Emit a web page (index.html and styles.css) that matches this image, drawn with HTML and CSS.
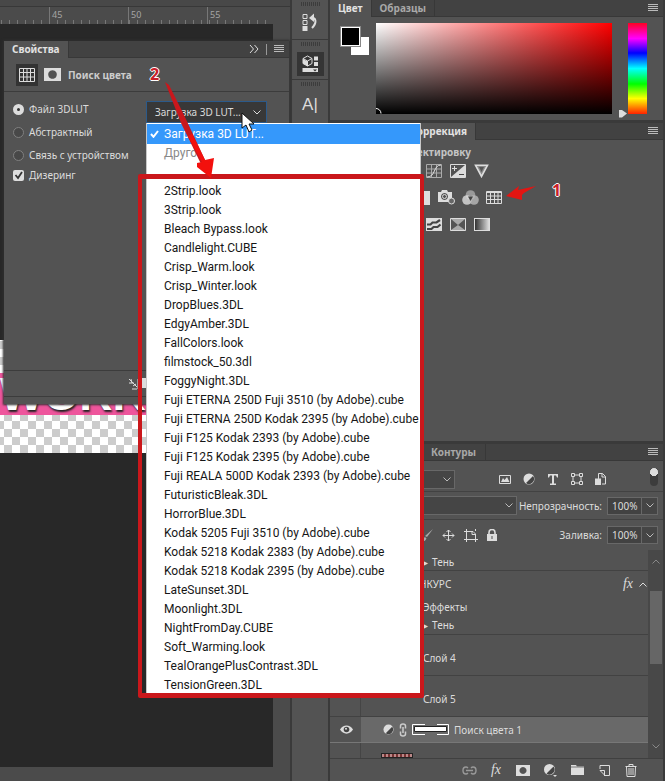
FILE: index.html
```html
<!DOCTYPE html>
<html lang="ru">
<head>
<meta charset="utf-8">
<title>Поиск цвета</title>
<link rel="stylesheet" href="styles.css">
</head>
<body>
<div class="app">
  <main class="workspace">
    <div class="topbar"></div>
    <div class="ruler"><span>45</span><span>50</span><span>55</span></div>
    <div class="document">
      <div class="artboard"><div class="banner">WORK</div></div>
    </div>
    <div class="status"></div>

    <section class="properties">
      <header class="tabs">
        <h2 class="tab active">Свойства</h2>
        <div class="tab-tools">
          <button class="icon" aria-label="Свернуть"><svg width="10" height="10" viewBox="0 0 10 10"><path class="line" d="M1 1l3.500 4L1 9M5.500 1L9 5 5.500 9"/></svg></button>
          <i class="divider"></i>
          <button class="icon burger" aria-label="Меню панели"></button>
        </div>
      </header>
      <div class="prop-title">
        <button class="icon boxed" aria-label="Таблица"><svg width="16" height="14" viewBox="0 0 16 14"><path class="line" d="M.5.5h15v13H.5zM.5 4.500h15M.5 9h15M4.500.5v13M8 .5v13M11.500.5v13"/></svg></button>
        <button class="icon" aria-label="Маска"><svg width="17" height="13" viewBox="0 0 17 13"><path class="fill" fill-rule="evenodd" d="M0 0h17v13H0zM8.500 2.200a4.300 4.300 0 1 0 .01 0z"/></svg></button>
        <h3>Поиск цвета</h3>
      </div>
      <div class="prop-body">
        <div class="choices">
          <label><input type="radio" name="lut" checked>Файл 3DLUT</label>
          <label><input type="radio" name="lut">Абстрактный</label>
          <label><input type="radio" name="lut">Связь с устройством</label>
          <label class="dither"><input type="checkbox" checked>Дизеринг</label>
        </div>
        <div class="lut-field">
          <select class="lut-select" aria-label="Файл 3DLUT"><option>Загрузка 3D LUT...</option></select>
          <svg class="chevron" width="8" height="5" viewBox="0 0 8 5"><path class="line" d="M.5.500L4 4 7.500.5"/></svg>
          <div class="menu">
            <ul>
              <li><button class="chosen"><svg width="9" height="8" viewBox="0 0 9 8"><path d="M1 4l2.500 2.800L8 1" fill="none" stroke="#fff" stroke-width="2"/></svg>Загрузка 3D LUT...</button></li>
              <li><button class="muted">Друго</button></li>
            </ul>
            <ul class="files">
              <li><button>2Strip.look</button></li>
              <li><button>3Strip.look</button></li>
              <li><button>Bleach Bypass.look</button></li>
              <li><button>Candlelight.CUBE</button></li>
              <li><button>Crisp_Warm.look</button></li>
              <li><button>Crisp_Winter.look</button></li>
              <li><button>DropBlues.3DL</button></li>
              <li><button>EdgyAmber.3DL</button></li>
              <li><button>FallColors.look</button></li>
              <li><button>filmstock_50.3dl</button></li>
              <li><button>FoggyNight.3DL</button></li>
              <li><button>Fuji ETERNA 250D Fuji 3510 (by Adobe).cube</button></li>
              <li><button>Fuji ETERNA 250D Kodak 2395 (by Adobe).cube</button></li>
              <li><button>Fuji F125 Kodak 2393 (by Adobe).cube</button></li>
              <li><button>Fuji F125 Kodak 2395 (by Adobe).cube</button></li>
              <li><button>Fuji REALA 500D Kodak 2393 (by Adobe).cube</button></li>
              <li><button>FuturisticBleak.3DL</button></li>
              <li><button>HorrorBlue.3DL</button></li>
              <li><button>Kodak 5205 Fuji 3510 (by Adobe).cube</button></li>
              <li><button>Kodak 5218 Kodak 2383 (by Adobe).cube</button></li>
              <li><button>Kodak 5218 Kodak 2395 (by Adobe).cube</button></li>
              <li><button>LateSunset.3DL</button></li>
              <li><button>Moonlight.3DL</button></li>
              <li><button>NightFromDay.CUBE</button></li>
              <li><button>Soft_Warming.look</button></li>
              <li><button>TealOrangePlusContrast.3DL</button></li>
              <li><button>TensionGreen.3DL</button></li>
            </ul>
            <div class="frame"></div>
          </div>
          <svg class="note-two" width="80" height="120" viewBox="0 0 80 120">
            <path fill="#c9171c" d="M19 17L23 20 38 50 60 97 56 101 35 58z"/>
            <path fill="#f3100d" d="M42 71l4-2 13 26 9-2-3 20-14-11 0-4 5-1z"/>
          </svg>
          <b class="number two">2</b>
          <svg class="cursor" width="14" height="21" viewBox="0 0 14 21"><path fill="#fff" stroke="#111" d="M1 1v15l4-3 3 7 3-2-3-6h5z"/></svg>
        </div>
      </div>
      <div class="prop-actions"><svg width="18" height="13" viewBox="0 0 18 13"><path class="line" d="M1 1l8 8M3 1l1 4M1 5h5M5 8l3-2M4 11h5M10 1v10"/><path class="fill" d="M13 0h5v10h-5z"/></svg></div>
    </section>
  </main>

  <nav class="strip">
    <div class="slot"><i class="grip"></i><button class="icon" aria-label="История"><svg width="18" height="20" viewBox="0 0 18 20"><path class="line" d="M2 2.500h4v4H2zM2 8.500h4v4H2z"/><path class="fill" d="M1.500 14h5v5h-5z"/><path d="M10 6c5.500-1 6 5 1 10" fill="none" stroke="#ddd" stroke-width="2"/><path class="fill" d="M8 6L13 1.500v8.500z"/></svg></button></div>
    <div class="slot"><i class="grip"></i><button class="icon pressed" aria-label="Свойства"><svg width="18" height="18" viewBox="0 0 18 18"><path class="line" d="M2 3.500L6.500 1 11 3.500v5L6.500 11 2 8.500zM2 3.500L6.500 6 11 3.500M6.500 6v5"/><path class="fill" d="M2 4l4.500 2.500V11L2 8.500zM13 1.500h4v4h-4zM13 7h4v4h-4zM1.500 13H17v4H1.500z"/><path fill="#333" d="M12 14.500h4L14 16.500z"/></svg></button></div>
    <div class="slot"><i class="grip"></i><button class="icon glyph" aria-label="Символ">A|</button></div>
  </nav>

  <aside class="docks">
    <section class="dock color">
      <header class="tabs"><h2 class="tab active">Цвет</h2><h2 class="tab">Образцы</h2><div class="tab-tools"><button class="icon burger" aria-label="Меню панели"></button></div></header>
      <div class="color-body">
        <div class="swatches"><i class="back"></i><i class="front"></i></div>
        <div class="field"><svg width="7" height="7" viewBox="0 0 7 7"><path d="M0 1.500a5 5 0 0 1 5 5" fill="none" stroke="#fff"/></svg></div>
        <div class="hue"><svg width="8" height="9" viewBox="0 0 8 9"><path fill="#ddd" d="M0 1h3l5 3.500L3 8.500H0z"/></svg></div>
      </div>
    </section>

    <section class="dock adjust">
      <header class="tabs"><h2 class="tab active">Коррекция</h2><div class="tab-tools"><button class="icon burger" aria-label="Меню панели"></button></div></header>
      <div class="adjust-body">
        <h3>корректировку</h3>
        <div class="icons">
          <button class="icon" aria-label="Кривые"><svg width="16" height="14" viewBox="0 0 16 14"><path stroke="#aaa" fill="none" d="M.5.5h15v13H.5zM.5 5h15M.5 9h15M5.500.5v13M10.500.5v13"/><path class="line" d="M1 13c9 0 6-12 14-12"/></svg></button>
          <button class="icon" aria-label="Экспозиция"><svg width="16" height="14" viewBox="0 0 16 14"><path class="line" d="M.5.5h15v13H.5z"/><path class="fill" d="M15 1v12H1z"/><path class="line" d="M2 4.500h5M4.500 2v5"/><path d="M9 10.500h5" stroke="#444"/></svg></button>
          <button class="icon" aria-label="Сочность"><svg width="16" height="14" viewBox="0 0 16 14"><path d="M1.500 1.200h12L7.500 12.500z" fill="#888" stroke="#ddd" stroke-width="1.600"/><path fill="#555" d="M5 3h5L7.500 8z"/></svg></button>
        </div>
        <div class="icons second">
          <button class="icon" aria-label="Чёрно-белое"><svg width="16" height="14" viewBox="0 0 16 14"><path class="fill" d="M0 0h16v14H0z"/></svg></button>
          <button class="icon" aria-label="Фотофильтр"><svg width="17" height="15" viewBox="0 0 17 15"><path class="fill" fill-rule="evenodd" d="M0 2h3l1-2h5l1 2h4v10H0zM6.500 3a3.500 3.500 0 1 0 .01 0z"/><circle cx="6.500" cy="6.500" r="2" class="line"/><circle cx="13.500" cy="11" r="3" fill="#666" stroke="#ddd"/></svg></button>
          <button class="icon" aria-label="Микширование каналов"><svg width="17" height="15" viewBox="0 0 17 15"><circle cx="8.500" cy="5" r="4.800" fill="#999"/><circle cx="5" cy="10" r="4.800" fill="#e0e0e0" fill-opacity=".8"/><circle cx="12" cy="10" r="4.800" fill="#bbb" fill-opacity=".8"/><path fill="#444" d="M6 6.500h5L8.500 11z"/></svg></button>
          <button class="icon" aria-label="Поиск цвета"><svg width="16" height="13" viewBox="0 0 16 13"><path class="line" d="M.5.5h15v12H.5zM.5 5h15M.5 8.500h15M4.500.5v12M8.500.5v12M12 .5v12"/><path class="line" d="M0 1.500h16"/></svg></button>
        </div>
        <div class="icons">
          <button class="icon" aria-label="Порог"><svg width="16" height="13" viewBox="0 0 16 13"><path class="fill" d="M0 0h16v13H0z"/><path fill="none" stroke="#444" stroke-width="2.200" d="M1 6.500h3.500l2-2h4l3.500-2.500M1 11h4.500l2-2h4l3-2.500"/></svg></button>
          <button class="icon" aria-label="Выборочная коррекция"><svg width="16" height="13" viewBox="0 0 16 13"><path fill="#aaa" stroke="#ddd" d="M.5.5h15v12H.5z"/><path fill="#555" d="M1 1l7 6-7 5zM15 1L8 7l7 5z"/></svg></button>
          <button class="icon gradient" aria-label="Карта градиента"></button>
        </div>
        <svg class="note-one" width="32" height="18" viewBox="0 0 32 18"><path fill="#e31512" d="M0 11L13 1l-1 4 18-4-12 7-2 2 0 5z"/></svg>
        <b class="number one">1</b>
      </div>
    </section>

    <section class="dock layers">
      <header class="tabs"><h2 class="tab">Контуры</h2><div class="tab-tools"><button class="icon burger" aria-label="Меню панели"></button></div></header>
      <div class="bar">
        <select class="drop kind" aria-label="Тип фильтра"></select>
        <div class="filters">
          <button class="icon" aria-label="Пиксели"><svg width="12" height="11" viewBox="0 0 12 11"><path class="line" d="M.5 1.500h11v8H.5z"/><path class="fill" d="M2 8l2-4 1.500 2L8 3l2.500 5z"/></svg></button>
          <button class="icon" aria-label="Коррекции"><svg width="12" height="12" viewBox="0 0 12 12"><circle cx="6" cy="6" r="5.500" class="fill"/><path fill="#444" d="M10 3A5 5 0 0 1 3 10z"/></svg></button>
          <button class="icon" aria-label="Текст"><svg width="12" height="11" viewBox="0 0 12 11"><path class="fill" d="M1 0h10v3.500h-1L9 1.500H7V9.500h2V11H3V9.500h2v-8H3L2 3.500H1z"/></svg></button>
          <button class="icon" aria-label="Фигуры"><svg width="12" height="12" viewBox="0 0 12 12"><path class="line" d="M2 2h8v8H2z"/><path d="M.5.5h3v3h-3zM8.500.5h3v3h-3zM.5 8.500h3v3h-3zM8.500 8.500h3v3h-3z" fill="#535353" stroke="#ddd"/></svg></button>
          <button class="icon" aria-label="Смарт-объекты"><svg width="12" height="12" viewBox="0 0 12 12"><path class="line" d="M3.500 6V.5h4l3 3v7.500H7M7 .5V4h3.500"/><path class="fill" d="M0 5.500h6V12H0z"/></svg></button>
        </div>
        <button class="toggle" aria-label="Фильтр слоёв"></button>
      </div>
      <div class="bar">
        <select class="drop blend" aria-label="Режим наложения"></select>
        <label for="opacity">Непрозрачность:</label>
        <input id="opacity" class="value" value="100%"><button class="step" aria-label="Изменить непрозрачность"></button>
      </div>
      <div class="bar last">
        <div class="locks">
          <button class="icon" aria-label="Кисть"><svg width="12" height="13" viewBox="0 0 12 13"><path fill="#aaa" d="M12 0L6 8 4 7zM4 8l1.500 1.500C4 13 2 12 0 12c2-1 2-3 4-4z"/></svg></button>
          <button class="icon" aria-label="Положение"><svg width="13" height="13" viewBox="0 0 13 13"><path class="line" d="M6.500 1v11M1 6.500h11M4.500 3l2-2 2 2M4.500 10l2 2 2-2M3 4.500l-2 2 2 2M10 4.500l2 2-2 2"/></svg></button>
          <button class="icon" aria-label="Монтажная область"><svg width="14" height="13" viewBox="0 0 14 13"><path class="line" d="M2.500 0v13M0 2.500h9l2.500 2.500v8M0 10.500h14M8 2.500v3h3.500M11.500 0v2"/></svg></button>
          <button class="icon" aria-label="Закрепить всё"><svg width="10" height="12" viewBox="0 0 10 12"><path class="fill" d="M0 5h10v7H0z"/><path fill="none" stroke="#ddd" stroke-width="1.600" d="M2 5.500V3.500a3 3 0 0 1 6 0v2"/><path fill="#555" d="M4.500 7h1v3h-1z"/></svg></button>
        </div>
        <label for="fill">Заливка:</label>
        <input id="fill" class="value" value="100%"><button class="step" aria-label="Изменить заливку"></button>
      </div>
      <div class="list">
        <ul class="rows">
          <li class="first ruled"><span class="effect">Тень</span></li>
          <li class="name"><span class="title">НКУРС</span><i class="fx">fx</i><svg width="8" height="5" viewBox="0 0 8 5"><path class="line" d="M.5 4.500L4 1l3.500 3.500"/></svg></li>
          <li class="short"><span class="title">Эффекты</span></li>
          <li class="short ruled"><span class="effect">Тень</span></li>
          <li class="tall ruled"><span class="title">Слой 4</span></li>
          <li class="tall ruled"><span class="title">Слой 5</span></li>
          <li class="selected ruled">
            <button class="icon eye" aria-label="Видимость"><svg width="13" height="9" viewBox="0 0 13 9"><path class="fill" d="M0 4.500C3-1 10-1 13 4.500 10 10 3 10 0 4.500z"/><circle cx="6.500" cy="4.500" r="2.800" fill="#444"/><circle cx="6" cy="3.800" r="1" fill="#ddd"/></svg></button>
            <svg width="11" height="11" viewBox="0 0 12 12"><circle cx="6" cy="6" r="5.500" class="fill"/><path fill="#444" d="M10 3A5 5 0 0 1 3 10z"/></svg>
            <svg width="8" height="14" viewBox="0 0 8 14"><path fill="none" stroke="#ccc" stroke-width="1.500" d="M1.500 5.500V3q0-2 2.500-2t2.500 2v2.500M1.500 8.500V11q0 2 2.500 2t2.500-2V8.500M4 4v6"/></svg>
            <svg width="37" height="11" viewBox="0 0 37 11"><path fill="none" stroke="#fff" d="M13 .5H.5v10H13M25 .5h11.500v10H25"/><path fill="#fff" stroke="#222" d="M2.500 2.500h32v5h-32z"/></svg>
            <span>Поиск цвета 1</span>
          </li>
          <li class="peek"><i class="thumb"></i></li>
        </ul>
        <div class="scroll">
          <svg width="8" height="5" viewBox="0 0 8 5"><path fill="none" stroke="#888" d="M.5 4.500L4 1l3.500 3.500"/></svg>
          <i class="thumbbar"></i>
          <svg class="down" width="8" height="5" viewBox="0 0 8 5"><path fill="none" stroke="#888" d="M.5.500L4 4 7.500.5"/></svg>
        </div>
      </div>
      <footer class="actions">
        <button class="icon dim" aria-label="Связать"><svg width="15" height="9" viewBox="0 0 15 9"><path fill="none" stroke="#999" stroke-width="1.400" d="M6 2Q5 1 4 1 1 1 1 4.500T4 8q1 0 2-1M9 2q1-1 2-1 3 0 3 3.500T11 8q-1 0-2-1M4 4.500h7"/></svg></button>
        <button class="icon fx" aria-label="Стиль слоя">fx</button>
        <button class="icon" aria-label="Маска слоя"><svg width="14" height="11" viewBox="0 0 14 11"><path class="fill" fill-rule="evenodd" d="M0 0h14v11H0zM7 2a3.500 3.500 0 1 0 .01 0z"/></svg></button>
        <button class="icon" aria-label="Корректирующий слой"><svg width="14" height="14" viewBox="0 0 14 14"><circle cx="6.500" cy="6.500" r="5.500" class="fill"/><path fill="#444" d="M10.500 3.500A5 5 0 0 1 3.500 10.500z"/><path class="fill" d="M10 12h4l-2 2z"/></svg></button>
        <button class="icon" aria-label="Группа"><svg width="13" height="10" viewBox="0 0 13 10"><path class="fill" d="M0 0h5l1 1.500h7V10H0z"/><path d="M0 2h13" stroke="#777"/></svg></button>
        <button class="icon" aria-label="Новый слой"><svg width="11" height="11" viewBox="0 0 11 11"><path class="line" d="M1 4V.5h9.500v10H5M1 5.500h4.500V10z"/></svg></button>
        <button class="icon" aria-label="Удалить"><svg width="12" height="13" viewBox="0 0 12 13"><path class="line" d="M.5 2.500h11M4 2V.5h4V2M1.500 3l.5 9.500h8l.5-9.500M4 4v7M6 4v7M8 4v7"/></svg></button>
      </footer>
    </section>
  </aside>
</div>
</body>
</html>
```
FILE: styles.css
```css
* { box-sizing: border-box; }
body {
  margin: 0;
  background: #3b3b3b;
  color: #dcdcdc;
  font: 10px/16px "Noto Sans", "Open Sans", sans-serif;
}
h2, h3, ul { margin: 0; padding: 0; list-style: none; }
h2, h3 { font-size: 10px; }
button, input, select { margin: 0; padding: 0; border: 0; font: inherit; color: inherit; background: none; }
i { font-style: normal; }
svg { display: block; flex: none; }
.line { fill: none; stroke: #ddd; }
.fill { fill: #ddd; }
.icon { display: grid; place-items: center; flex: none; }

.app { display: grid; grid-template-columns: minmax(0, 1fr) 40px 335px; min-height: 100vh; }

/* Canvas area */
.workspace { position: relative; display: flex; flex-direction: column; background: #4b4b4b; }
.topbar { height: 7px; background: #484848; border-bottom: 1px solid #383838; }
.ruler {
  display: flex;
  height: 17px;
  margin-right: 17px;
  padding-left: 49px;
  color: #a5a5a5;
  font-size: 9px;
  background: repeating-linear-gradient(90deg, #777 0 1px, transparent 1px 8px) 1px 100% / 100% 4px no-repeat;
}
.ruler span { flex: none; width: 79px; padding-left: 2px; border-left: 1px solid #777; }
.ruler span:last-child { width: auto; }
.document { position: relative; flex: 1; margin-right: 17px; background: #282828; overflow: hidden; }
.status { height: 14px; background: #4b4b4b; }
.artboard {
  position: absolute;
  top: 316px;
  left: 0;
  width: 146px;
  height: 113px;
  padding-top: 33px;
  background: repeating-conic-gradient(#ccc 0 25%, #fff 0 50%) 4px 1px / 16px 16px;
}
.banner {
  height: 42px;
  background: #ee559c;
  color: #fff;
  font: bold 46px/42px "Liberation Sans", sans-serif;
  text-shadow: 1px 2px 2px #222;
}

/* Tab headers */
.tabs { display: flex; height: 17px; background: #424242; border-bottom: 1px solid #383838; }
.tab { padding: 0 8px; line-height: 16px; color: #a8a8a8; border-right: 1px solid #383838; }
.tab.active { height: 17px; color: #e2e2e2; background: #535353; }
.tab-tools { display: flex; align-items: center; gap: 7px; margin-left: auto; padding-right: 5px; }
.divider { width: 1px; height: 11px; background: #999; }
.burger { width: 10px; height: 8px; background: repeating-linear-gradient(#bbb 0 1px, transparent 1px 2px); }

/* Properties */
.properties {
  position: absolute;
  z-index: 2;
  top: 41px;
  left: 4px;
  right: 1px;
  background: #535353;
  box-shadow: 0 0 2px 1px #303030;
}
.prop-title { display: flex; align-items: center; gap: 6px; height: 34px; padding-left: 12px; border-bottom: 1px solid #3c3c3c; }
.prop-title h3 { padding-left: 1px; color: #ccc; }
.boxed { width: 22px; height: 22px; background: #333; }
.prop-body { display: flex; min-height: 279px; padding: 9px 22px 0 9px; border-bottom: 1px solid #3c3c3c; }
.choices { display: flex; flex-direction: column; flex: 1; gap: 7px; }
.choices label { display: flex; align-items: center; gap: 5px; white-space: nowrap; }
.choices .dither { margin-top: -3px; }
.choices input { appearance: none; flex: none; width: 11px; height: 11px; border: 1px solid #808080; border-radius: 50%; background: #484848; }
.choices input[type=radio]:checked { border: 4px solid #ddd; background: #333; }
.choices input[type=checkbox] {
  border: 0;
  border-radius: 2px;
  background: url("data:image/svg+xml,%3Csvg xmlns='http://www.w3.org/2000/svg' width='11' height='11'%3E%3Cpath d='M2.500 5l2.500 3 4-6' fill='none' stroke='%23333' stroke-width='1.800'/%3E%3C/svg%3E") #ddd;
}
.lut-field { position: relative; width: 121px; height: 22px; }
.lut-select { display: block; appearance: none; width: 100%; height: 22px; padding-left: 8px; border: 1px solid #2c5a8a; background: #383838; }
.chevron { position: absolute; top: 9px; right: 6px; }
.cursor { position: absolute; top: 11px; left: 95px; }

.menu { position: absolute; top: 22px; left: 0; width: 275px; padding-top: 1px; background: #fff; color: #161616; font: 12px/19px Roboto, sans-serif; border: solid #c8c8c8; border-width: 0 1px; }
.menu button { display: flex; align-items: center; width: 100%; height: 19px; padding-left: 17px; white-space: nowrap; }
.menu .chosen { height: 20px; gap: 5px; padding-left: 3px; background: #3598fb; color: #fff; }
.menu .muted { color: #888; }
.files { padding-top: 19px; }
.frame { position: absolute; top: 51px; bottom: -3px; left: -9px; right: -4px; border: 5px solid #ca171b; border-width: 5px 4px; border-radius: 2px; }
.note-two { position: absolute; top: -36px; left: 0; }
.number { position: absolute; color: #c9202a; font: bold 16px/20px "Open Sans", sans-serif; text-shadow: 1px 0 #fff, -1px 0 #fff, 0 1px #fff, 0 -1px #fff; }
.two { top: -37px; left: 4px; }
.prop-actions { height: 33px; padding: 7px 0 0 124px; background: linear-gradient(#3c3c3c, #3c3c3c) 0 25px / 100% 1px no-repeat; }

/* Icon strip */
.strip { background: #535353; border: solid #3a3a3a; border-width: 0 2px; }
.slot { display: flex; flex-direction: column; align-items: center; gap: 6px; height: 40px; padding-top: 2px; border-bottom: 1px solid #3a3a3a; }
.slot:last-child { height: 44px; }
.grip { width: 19px; height: 4px; background: repeating-linear-gradient(90deg, #3c3c3c 0 1px, transparent 1px 2px); }
.pressed { width: 27px; height: 24px; background: #353535; }
.glyph { font: 17px/26px "Liberation Sans", sans-serif; }

/* Docked panels */
.docks { display: flex; flex-direction: column; border-right: 2px solid #3a3a3a; }
.dock { background: #535353; border-bottom: 3px solid #3a3a3a; }
.color-body { display: flex; padding: 6px 16px 6px 11px; }
.swatches { position: relative; width: 35px; height: 36px; }
.swatches i { position: absolute; width: 18px; height: 18px; }
.swatches .back { left: 10px; top: 14px; background: #fff; }
.swatches .front { left: 0; top: 4px; width: 19px; height: 19px; background: #000; border: 1px solid #fff; outline: 1px solid #888; }
.field { display: flex; align-items: flex-end; flex: 1; height: 91px; background: linear-gradient(transparent, #000), linear-gradient(90deg, #fff, #f00); }
.hue { position: relative; width: 19px; margin-left: 16px; background: linear-gradient(#f02, #f0f 17%, #00f 33%, #0ff 50%, #0f0 67%, #ff0 83%, #f20); }
.hue svg { position: absolute; left: -9px; bottom: -4px; }

.adjust { flex: 1; }
.adjust .tab { padding-left: 80px; }
.adjust-body { position: relative; padding: 4px 0 0 96px; }
.adjust-body h3 { margin: 0 0 -3px -34px; color: #c4c4c4; }
.icons { display: flex; align-items: center; gap: 8px; height: 27px; }
.icons .icon { width: 16px; }
.icons.second { margin-left: -12px; }
.gradient { height: 13px; border: 1px solid #ddd; background: linear-gradient(90deg, #333, #ddd); }
.note-one { position: absolute; top: 45px; left: 176px; }
.one { top: 40px; left: 222px; }

.layers { border-bottom: 0; }
.layers .tab { padding-left: 101px; padding-right: 9px; }
.bar { display: flex; align-items: center; height: 28px; padding: 0 5px; border-bottom: 1px solid #424242; }
.tabs + .bar { height: 31px; padding-top: 6px; }
.bar.last { border: 0; height: 30px; }
.bar label { margin-left: auto; }
.drop, .step {
  height: 19px;
  border: 1px solid #686868;
  background: #454545 url("data:image/svg+xml,%3Csvg xmlns='http://www.w3.org/2000/svg' width='8' height='5'%3E%3Cpath d='M.5.500L4 4 7.500.5' fill='none' stroke='%23bbb'/%3E%3C/svg%3E") right 3px center no-repeat;
}
.drop { appearance: none; }
.kind { width: 120px; }
.blend { width: 182px; }
.filters { display: flex; gap: 12px; margin-left: 44px; }
.toggle { width: 8px; height: 18px; margin: -4px 0 0 auto; border-radius: 4px; background: radial-gradient(circle at 4px 4px, #ddd 4px, #3c3c3c 4px); }
.value { width: 35px; height: 18px; margin-left: 5px; padding-left: 4px; border: 1px solid #686868; background: #424242; }
.step { width: 16px; height: 18px; border-left: 0; }
.locks { display: flex; align-items: center; gap: 9px; margin-left: 86px; }

.list { display: flex; }
.rows { flex: 1; background: linear-gradient(90deg, transparent 30px, #454545 30px 31px, transparent 31px); }
.rows li { display: flex; align-items: center; padding-left: 93px; }
.rows .ruled { border-bottom: 1px solid #424242; }
.first { height: 21px; padding-top: 4px; }
.short { height: 19px; }
.name { height: 26px; }
.tall { height: 41px; padding-top: 5px; }
.effect::before { content: "▸"; margin-right: 4px; }
.name .title { margin-left: -4px; flex: 1; }
.name .fx { margin-right: 6px; }
.fx { font: italic 14px/16px "Liberation Serif", serif; }
.name svg { margin-right: 1px; }
.rows .selected { gap: 5px; height: 26px; padding-left: 10px; background: linear-gradient(90deg, #535353 31px, #696969 31px); border-bottom-color: #777; }
.eye { width: 13px; margin-right: 25px; }
.rows .peek { height: 15px; align-items: flex-end; padding-left: 51px; }
.thumb { width: 32px; height: 5px; border: 1px solid #222; background: repeating-linear-gradient(90deg, #b88 0 2px, #733 2px 4px); }
.scroll { display: flex; flex-direction: column; align-items: center; width: 15px; padding: 9px 0; background: #484848; }
.thumbbar { width: 12px; height: 73px; margin-top: 27px; background: #666; }
.down { margin-top: auto; }
.actions { display: flex; justify-content: flex-end; gap: 11px; height: 23px; padding-right: 24px; border-top: 1px solid #404040; }
.actions .icon { width: 16px; }
```
